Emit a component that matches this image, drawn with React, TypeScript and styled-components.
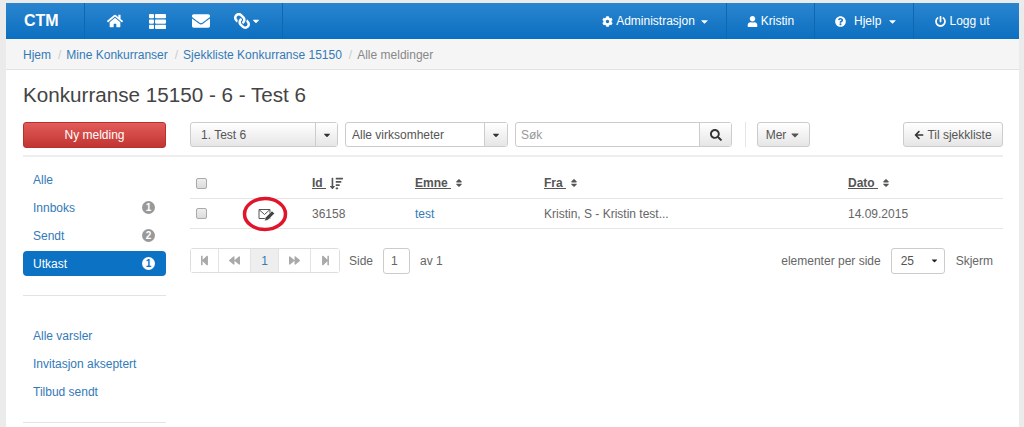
import styled, { createGlobalStyle } from 'styled-components'
import {
  FaArrowLeft,
  FaBackward,
  FaCaretDown,
  FaCog,
  FaEnvelope,
  FaForward,
  FaHome,
  FaLink,
  FaPowerOff,
  FaQuestionCircle,
  FaSearch,
  FaSort,
  FaSortAmountDown,
  FaStepBackward,
  FaStepForward,
  FaThList,
  FaUser,
} from 'react-icons/fa'

const GlobalStyle = createGlobalStyle`
  html, body {
    margin: 0;
    padding: 0;
    height: 427px;
    overflow: hidden;
    background: #ebebeb;
    font-family: "Liberation Sans", Arial, sans-serif;
    font-size: 12px;
    color: #555;
  }
  * { box-sizing: border-box; }
`

const Shell = styled.div`
  margin: 3px 5px 0 6px;
  height: 424px;
  background: #fff;
  overflow: hidden;
`

const Navbar = styled.nav`
  display: flex;
  height: 36px;
  background: linear-gradient(#2a85cf, #0b6fc0);
  color: #fff;
`

const Brand = styled.div`
  width: 79px;
  padding-left: 18px;
  font-size: 16px;
  font-weight: bold;
  line-height: 35px;
  border-right: 1px solid #0f67b1;
`

const IconGroup = styled.div`
  width: 198px;
  padding-left: 8px;
  display: flex;
  align-items: center;
  border-right: 1px solid #0f67b1;
`

const NavIcon = styled.span<{ $width: number; $size: number; $flip?: boolean }>`
  width: ${props => props.$width}px;
  display: flex;
  align-items: center;
  justify-content: center;
  font-size: ${props => props.$size}px;
  svg:first-child {
    transform: ${props => (props.$flip ? 'scaleX(-1)' : 'none')};
  }
`

const NavSpacer = styled.div`
  flex: 1;
`

const NavCell = styled.div<{ $width: number; $left?: number; $right?: number; $gap?: number; $last?: boolean }>`
  width: ${props => props.$width}px;
  padding: 0 ${props => props.$right ?? 0}px 0 ${props => props.$left ?? 0}px;
  display: flex;
  align-items: center;
  justify-content: center;
  gap: ${props => props.$gap ?? 3}px;
  font-size: 12px;
  border-right: ${props => (props.$last ? 'none' : '1px solid #0f67b1')};
  svg {
    font-size: 11px;
  }
`

const Caret = styled(FaCaretDown)`
  margin-left: 1px;
  font-size: 10px;
`

const Crumbs = styled.div`
  height: 31px;
  padding: 1px 0 0 17px;
  display: flex;
  align-items: center;
  background: #f5f5f5;
  border-bottom: 1px solid #e3e3e3;
  font-size: 12px;
  a {
    color: #337ab7;
    text-decoration: none;
  }
`

const CrumbSeparator = styled.span`
  padding: 0 5px 0 7px;
  color: #ccc;
`

const CrumbCurrent = styled.span`
  color: #888;
`

const Content = styled.main`
  padding: 13px 16px 0 17px;
`

const Title = styled.h1`
  margin: 0;
  height: 39px;
  font-size: 20.65px;
  font-weight: normal;
  line-height: 24px;
  color: #444;
`

const Toolbar = styled.div`
  display: flex;
  height: 35px;
  border-bottom: 2px solid #eee;
  align-items: flex-start;
`

const NewMessage = styled.button`
  width: 143px;
  height: 26px;
  margin-right: 24px;
  padding: 0;
  font: 12px "Liberation Sans", Arial, sans-serif;
  color: #fff;
  background: linear-gradient(#e25c59, #c13532);
  border: 1px solid #b8312f;
  border-radius: 3px;
`

const Combo = styled.div<{ $width: number; $gradient?: boolean }>`
  width: ${props => props.$width}px;
  height: 25px;
  margin-right: 7px;
  display: flex;
  align-items: center;
  border: 1px solid #ccc;
  border-radius: 3px;
  background: ${props => (props.$gradient ? 'linear-gradient(#fff, #e6e6e6)' : '#fff')};
  font-size: 12px;
`

const ComboText = styled.span<{ $inset: number; $muted?: boolean }>`
  flex: 1;
  padding-left: ${props => props.$inset}px;
  color: ${props => (props.$muted ? '#999' : '#555')};
`

const ComboButton = styled.span<{ $width: number }>`
  width: ${props => props.$width}px;
  height: 100%;
  display: flex;
  align-items: center;
  justify-content: center;
  border-left: 1px solid #ccc;
  background: linear-gradient(#fff, #e6e6e6);
  color: #333;
  font-size: 10px;
`

const SearchGlyph = styled(FaSearch)`
  font-size: 12px;
`

const VerticalRule = styled.div`
  width: 1px;
  height: 25px;
  margin: 0 11px 0 6px;
  background: #e5e5e5;
`

const GreyButton = styled.button<{ $width: number }>`
  width: ${props => props.$width}px;
  height: 25px;
  padding: 0;
  display: flex;
  align-items: center;
  justify-content: center;
  gap: 3px;
  font: 12px "Liberation Sans", Arial, sans-serif;
  color: #555;
  background: linear-gradient(#fff, #e6e6e6);
  border: 1px solid #ccc;
  border-radius: 3px;
`

const BackArrow = styled(FaArrowLeft)`
  font-size: 10px;
  color: #333;
`

const Push = styled.div`
  flex: 1;
`

const Columns = styled.div`
  display: flex;
`

const Sidebar = styled.aside`
  width: 143px;
  margin-right: 24px;
  padding-top: 10px;
  flex-shrink: 0;
`

const SideGroup = styled.div`
  display: flex;
  flex-direction: column;
  gap: 3px;
`

const SideItem = styled.a<{ $active?: boolean }>`
  height: 25px;
  padding: 0 10px;
  display: flex;
  align-items: center;
  justify-content: space-between;
  border-radius: 4px;
  font-size: 12px;
  color: ${props => (props.$active ? '#fff' : '#337ab7')};
  background: ${props => (props.$active ? '#0b72c4' : 'transparent')};
`

const Count = styled.span<{ $active?: boolean }>`
  width: 13px;
  height: 13px;
  margin-right: 1px;
  border-radius: 50%;
  display: flex;
  align-items: center;
  justify-content: center;
  font-size: 10px;
  font-weight: bold;
  color: ${props => (props.$active ? '#0b72c4' : '#fff')};
  background: ${props => (props.$active ? '#fff' : '#999')};
`

const SideRule = styled.hr<{ $top: number; $bottom: number }>`
  margin: ${props => props.$top}px 0 ${props => props.$bottom}px;
  height: 1px;
  border: 0;
  background: #e3e3e3;
`

const Main = styled.section`
  flex: 1;
  padding-top: 11px;
`

const TableRow = styled.div<{ $height: number }>`
  position: relative;
  height: ${props => props.$height}px;
  display: grid;
  grid-template-columns: 122px 103px 129px 304px 1fr;
  align-items: center;
  border-bottom: 1px solid #e5e5e5;
`

const Check = styled.input.attrs({ type: 'checkbox' })`
  appearance: none;
  width: 11px;
  height: 11px;
  margin: 0 0 0 6px;
  display: block;
  border: 1px solid #aaa;
  border-radius: 2px;
  background: linear-gradient(#eee, #dcdcdc);
`

const CheckCell = styled.div`
  display: flex;
  align-items: center;
`

const Heading = styled.div`
  display: flex;
  align-items: center;
  font-size: 12px;
  font-weight: bold;
  color: #555;
  span {
    text-decoration: underline;
    white-space: pre;
  }
  svg {
    margin-left: 3px;
    font-size: 10px;
  }
`

const SortAmount = styled(FaSortAmountDown)`
  && {
    margin-left: 4px;
    font-size: 13px;
  }
`

const Cell = styled.div`
  font-size: 12px;
  color: #666;
`

const CellLink = styled.a`
  font-size: 12px;
  color: #337ab7;
`

const DraftIcon = styled.svg`
  display: block;
  position: absolute;
  left: 68px;
  top: 8px;
`

// the red ring someone drew on the screenshot, lies over the row
const Annotation = styled.svg`
  position: absolute;
  left: 52px;
  top: -3px;
  pointer-events: none;
`

const Pager = styled.div`
  height: 25px;
  margin-top: 19px;
  display: flex;
  align-items: center;
  font-size: 12px;
  color: #666;
`

const PagerGroup = styled.div`
  display: flex;
  height: 25px;
  border: 1px solid #ddd;
  border-radius: 3px;
`

const PagerButton = styled.span<{ $width: number; $active?: boolean }>`
  width: ${props => props.$width}px;
  display: flex;
  align-items: center;
  justify-content: center;
  font-size: ${props => (props.$active ? 12 : 11)}px;
  color: ${props => (props.$active ? '#337ab7' : '#a9a9a9')};
  background: ${props => (props.$active ? '#eee' : '#fff')};
  border-left: 1px solid #e3e3e3;
  &:first-child {
    border-left: 0;
  }
`

const PageInput = styled.span`
  width: 27px;
  height: 26px;
  margin: 0 10px;
  padding-left: 7px;
  display: flex;
  align-items: center;
  border: 1px solid #ccc;
  border-radius: 3px;
`

const SideLabel = styled.span`
  margin-left: 9px;
`

const PageSize = styled.span`
  width: 54px;
  height: 26px;
  margin: 0 11px 0 10px;
  padding: 0 5px 0 9px;
  display: flex;
  align-items: center;
  justify-content: space-between;
  border: 1px solid #ccc;
  border-radius: 3px;
  color: #555;
  svg {
    font-size: 9px;
    color: #222;
  }
`

const ScreenLabel = styled.span`
  margin-right: 10px;
`

const columns = [
  { label: 'Id ', icon: <SortAmount /> },
  { label: 'Emne ', icon: <FaSort /> },
  { label: 'Fra ', icon: <FaSort /> },
  { label: 'Dato ', icon: <FaSort /> },
]

export default function App() {
  return (
    <>
      <GlobalStyle />
      <Shell>
        <Navbar>
          <Brand>CTM</Brand>
          <IconGroup>
            <NavIcon $width={43} $size={16}><FaHome /></NavIcon>
            <NavIcon $width={43} $size={17}><FaThList /></NavIcon>
            <NavIcon $width={43} $size={18}><FaEnvelope /></NavIcon>
            <NavIcon $width={50} $size={16} $flip><FaLink /><Caret /></NavIcon>
          </IconGroup>
          <NavSpacer />
          <NavCell $width={141}><FaCog />Administrasjon<Caret /></NavCell>
          <NavCell $width={88}><FaUser />Kristin</NavCell>
          <NavCell $width={99} $left={5} $gap={5}><FaQuestionCircle />&nbsp;Hjelp<Caret /></NavCell>
          <NavCell $width={105} $right={8} $last><FaPowerOff />Logg ut</NavCell>
        </Navbar>
        <Crumbs>
          <a>Hjem</a>
          <CrumbSeparator>/</CrumbSeparator>
          <a>Mine Konkurranser</a>
          <CrumbSeparator>/</CrumbSeparator>
          <a>Sjekkliste Konkurranse 15150</a>
          <CrumbSeparator>/</CrumbSeparator>
          <CrumbCurrent>Alle meldinger</CrumbCurrent>
        </Crumbs>
        <Content>
          <Title>Konkurranse 15150 - 6 - Test 6</Title>
          <Toolbar>
            <NewMessage>Ny melding</NewMessage>
            <Combo $width={148} $gradient>
              <ComboText $inset={10}>1. Test 6</ComboText>
              <ComboButton $width={22}><FaCaretDown /></ComboButton>
            </Combo>
            <Combo $width={163}>
              <ComboText $inset={6}>Alle virksomheter</ComboText>
              <ComboButton $width={23}><FaCaretDown /></ComboButton>
            </Combo>
            <Combo $width={217}>
              <ComboText $inset={5} $muted>Søk</ComboText>
              <ComboButton $width={32}><SearchGlyph /></ComboButton>
            </Combo>
            <VerticalRule />
            <GreyButton $width={53}>Mer<FaCaretDown /></GreyButton>
            <Push />
            <GreyButton $width={100}><BackArrow />Til sjekkliste</GreyButton>
          </Toolbar>
          <Columns>
            <Sidebar>
              <SideGroup>
                <SideItem>Alle</SideItem>
                <SideItem>Innboks<Count>1</Count></SideItem>
                <SideItem>Sendt<Count>2</Count></SideItem>
                <SideItem $active>Utkast<Count $active>1</Count></SideItem>
              </SideGroup>
              <SideRule $top={19} $bottom={27} />
              <SideGroup>
                <SideItem>Alle varsler</SideItem>
                <SideItem>Invitasjon akseptert</SideItem>
                <SideItem>Tilbud sendt</SideItem>
              </SideGroup>
              <SideRule $top={18} $bottom={0} />
            </Sidebar>
            <Main>
              <TableRow $height={31}>
                <CheckCell><Check /></CheckCell>
                {columns.map(column => (
                  <Heading key={column.label}>
                    <span>{column.label}</span>
                    {column.icon}
                  </Heading>
                ))}
              </TableRow>
              <TableRow $height={30}>
                <CheckCell><Check /></CheckCell>
                <Cell>36158</Cell>
                <CellLink>test</CellLink>
                <Cell>Kristin, S - Kristin test...</Cell>
                <Cell>14.09.2015</Cell>
                <DraftIcon width="17" height="16" viewBox="0 0 17 16">
                  <path d="M1 2.500h11v9H1z" fill="#fff" stroke="#555" strokeWidth="1" />
                  <path d="M1 2.500l5.500 5 5.500-5" fill="none" stroke="#555" strokeWidth="1" />
                  <path d="M6.500 14l1-3.500 6.500-6.500 2.500 2.500-6.500 6.500z" fill="#444" stroke="#fff" strokeWidth="0.5" />
                </DraftIcon>
                <Annotation width="46" height="36" viewBox="0 0 46 36">
                  <ellipse cx="23" cy="18" rx="20.500" ry="15.500" fill="none" stroke="#e0142a" strokeWidth="3.500" />
                </Annotation>
              </TableRow>
              <Pager>
                <PagerGroup>
                  <PagerButton $width={27}><FaStepBackward /></PagerButton>
                  <PagerButton $width={32}><FaBackward /></PagerButton>
                  <PagerButton $width={28} $active>1</PagerButton>
                  <PagerButton $width={32}><FaForward /></PagerButton>
                  <PagerButton $width={29}><FaStepForward /></PagerButton>
                </PagerGroup>
                <SideLabel>Side</SideLabel>
                <PageInput>1</PageInput>
                av 1
                <Push />
                elementer per side
                <PageSize>25<FaCaretDown /></PageSize>
                <ScreenLabel>Skjerm</ScreenLabel>
              </Pager>
            </Main>
          </Columns>
        </Content>
      </Shell>
    </>
  )
}
